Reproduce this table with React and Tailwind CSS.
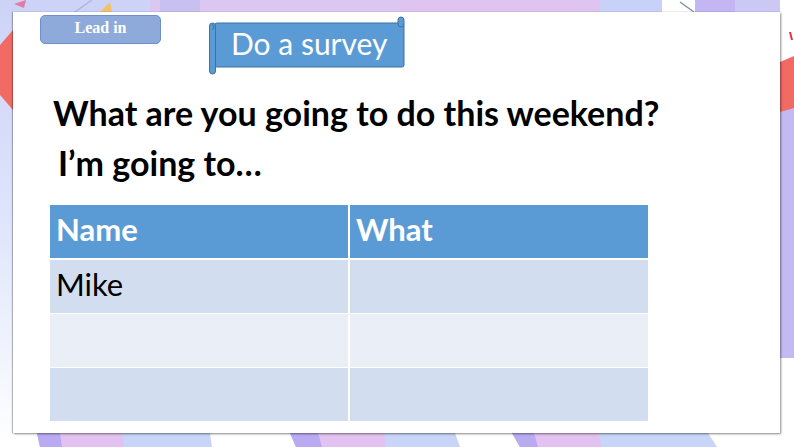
export default function App() {
  const lato = { fontFamily: "Lato, 'Open Sans', sans-serif" };
  return (
    <div className="relative w-[794px] h-[447px] overflow-hidden bg-white">
      {/* background decorations */}
      <div className="absolute inset-0">
        {/* top band */}
        <div className="absolute left-0 top-0 w-[160px] h-[14px] bg-[#cdd3f6]" />
        <div className="absolute left-[150px] top-0 w-[250px] h-[14px] bg-[#dcc6f2]" />
        <div className="absolute left-[160px] top-0 w-[40px] h-[14px] bg-[#c9c0f2]" />
        <div className="absolute left-[400px] top-0 w-[200px] h-[14px] bg-[#dfc4f2]" />
        <div className="absolute left-[600px] top-0 w-[62px] h-[14px] bg-[#c8d2f8]" />
        <div className="absolute left-[695px] top-0 w-[40px] h-[14px] bg-[#c4b6f2]" />
        <div className="absolute left-[735px] top-0 w-[45px] h-[14px] bg-[#ccc8f6]" />
        <svg className="absolute left-0 top-0" width="794" height="14">
          <polygon points="14,4 26,0 24,8" fill="#e27ba0" />
          <polygon points="100,12 110,2 112,12" fill="#f3c16a" />
          <line x1="72" y1="14" x2="92" y2="0" stroke="#a9b8e8" strokeWidth="1.5" />
          <line x1="680" y1="2" x2="694" y2="12" stroke="#8090a8" strokeWidth="1.5" />
        </svg>
        {/* left strip */}
        <div className="absolute left-0 top-0 w-[13px] h-[447px] bg-gradient-to-b from-[#cdd3f6] via-[#dfe5fb] to-white" />
        <svg className="absolute left-0 top-0" width="13" height="120">
          <polygon points="0,45 13,30 13,110 0,95" fill="#f26a64" />
        </svg>
        {/* right strip */}
        <div className="absolute left-[780px] top-[108px] w-[14px] h-[250px] bg-[#c4baf2]" />
        <svg className="absolute left-[780px] top-0" width="14" height="120">
          <polygon points="0,62 14,56 14,108 0,112" fill="#f26a64" />
          <polygon points="9,32 11,32 13,40 11,40" fill="#e0304c" />
        </svg>
        {/* bottom band */}
        <svg className="absolute left-0 top-[433px]" width="794" height="14">
          <polygon points="37,0 210,0 212,14 40,14" fill="#c8d4f8" />
          <polygon points="37,0 122,0 124,14 40,14" fill="#e2c2f0" />
          <polygon points="37,0 60,0 62,14 40,14" fill="#b9aaf2" />
          <polygon points="290,0 400,0 400,14 296,14" fill="#c8d4f8" />
          <polygon points="290,0 384,0 386,14 296,14" fill="#e2c2f0" />
          <polygon points="290,0 318,0 322,14 296,14" fill="#b9aaf2" />
          <polygon points="400,0 455,0 460,14 400,14" fill="#c8d4f8" />
          <polygon points="512,0 708,0 717,14 520,14" fill="#c8d4f8" />
          <polygon points="512,0 598,0 602,14 520,14" fill="#e2c2f0" />
          <polygon points="512,0 534,0 538,14 520,14" fill="#b9aaf2" />
        </svg>
      </div>

      {/* slide panel */}
      <div className="relative ml-[13px] mt-[12px] w-[767px] h-[421px] bg-white shadow-[1px_1px_2px_rgba(0,0,0,0.45),-1px_0_1px_rgba(0,0,0,0.25)]">
        <div className="flex items-start pl-[27px] pt-[3px]">
          <div className="w-[121px] h-[29px] rounded-[5px] bg-[#8eaadb] border border-[#6e8fc9] flex justify-center pt-[2px]">
            <span className="text-white font-bold text-[16px] leading-[20px]" style={{ fontFamily: "'Liberation Serif', serif" }}>
              Lead in
            </span>
          </div>
          <div className="relative ml-[48px] mt-[0px] w-[196px] h-[60px]">
            <svg className="absolute left-0 top-0" width="196" height="60" viewBox="0 0 196 60">
              <rect x="6" y="8" width="189" height="44" fill="#5b9bd5" stroke="#41719c" strokeWidth="1" rx="2" />
              <rect x="189" y="2" width="6" height="10" rx="3" fill="#5b9bd5" stroke="#41719c" strokeWidth="1" />
              <rect x="0.5" y="8" width="6" height="51" rx="3" fill="#5b9bd5" stroke="#41719c" strokeWidth="1" />
              <path d="M3.5 9 Q6 12 3.5 15" fill="none" stroke="#41719c" strokeWidth="1" />
            </svg>
            <div className="absolute left-[22px] top-[11px] text-white text-[30px] leading-[34px]" style={lato}>
              Do a survey
            </div>
          </div>
        </div>

        <div className="pl-[40px] mt-[18px] font-bold text-black" style={lato}>
          <div className="text-[34px] leading-[40px]">What are you going to do this weekend?</div>
          <div className="text-[34px] leading-[40px] mt-[10px] pl-[5px]">I’m going to…</div>
        </div>

        <div className="ml-[37px] mt-[22px] w-[598px] grid grid-cols-[298px_298px] gap-x-[2px]" style={lato}>
          <div className="h-[53px] bg-[#5b9bd5] text-white font-bold text-[31px] leading-[36px] pl-[6px] pt-[6px]">Name</div>
          <div className="h-[53px] bg-[#5b9bd5] text-white font-bold text-[31px] leading-[36px] pl-[6px] pt-[6px]">What</div>
          <div className="h-[53px] mt-[2px] bg-[#d2deef] text-black text-[31px] leading-[36px] pl-[6px] pt-[6px]">Mike</div>
          <div className="h-[53px] mt-[2px] bg-[#d2deef]" />
          <div className="h-[53px] mt-[1px] bg-[#eaeff7]" />
          <div className="h-[53px] mt-[1px] bg-[#eaeff7]" />
          <div className="h-[53px] mt-[1px] bg-[#d2deef]" />
          <div className="h-[53px] mt-[1px] bg-[#d2deef]" />
        </div>
      </div>
    </div>
  );
}
